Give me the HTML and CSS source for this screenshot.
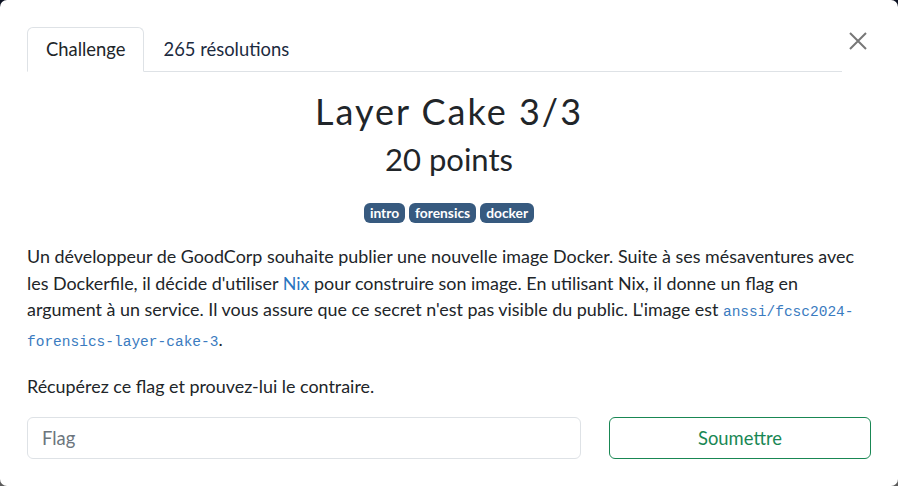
FILE: index.html
```html
<!DOCTYPE html>
<html lang="fr">
<head>
<meta charset="utf-8">
<title>Layer Cake 3/3</title>
<link rel="stylesheet" href="styles.css">
</head>
<body>
<div class="modal">
  <div class="header">
    <ul class="tabs">
      <li class="tab active">Challenge</li>
      <li class="tab">265 résolutions</li>
    </ul>
    <button class="close" aria-label="Fermer">
      <svg width="20" height="20" viewBox="0 0 20 20"><path d="M2 2 L18 18 M18 2 L2 18" stroke="#777" stroke-width="2" fill="none"/></svg>
    </button>
  </div>
  <h1 class="title">Layer Cake 3/3</h1>
  <h2 class="points">20 points</h2>
  <div class="badges">
    <span class="badge">intro</span>
    <span class="badge">forensics</span>
    <span class="badge">docker</span>
  </div>
  <p class="desc">Un développeur de GoodCorp souhaite publier une nouvelle image Docker. Suite à ses mésaventures avec les Dockerfile, il décide d'utiliser <a href="#">Nix</a> pour construire son image. En utilisant Nix, il donne un flag en argument à un service. Il vous assure que ce secret n'est pas visible du public. L'image est <code>anssi/fcsc2024-forensics-layer-cake-3</code>.</p>
  <p class="desc">Récupérez ce flag et prouvez-lui le contraire.</p>
  <form class="submit-row">
    <input class="flag" type="text" placeholder="Flag">
    <button class="submit" type="button">Soumettre</button>
  </form>
</div>
</body>
</html>
```
FILE: styles.css
```css
html, body {
  margin: 0;
  height: 100%;
}
body {
  background: linear-gradient(#0c1222, #5c5c5c);
  font-family: Lato, "Noto Sans", sans-serif;
  color: #212529;
  font-size: 18.4px;
}
.modal {
  box-sizing: border-box;
  height: 486px;
  background: #fff;
  border-radius: 7px;
  padding: 27px 27px 0 27px;
}
.header {
  display: flex;
  align-items: flex-start;
}
.tabs {
  flex: 1;
  display: flex;
  list-style: none;
  margin: 0;
  padding: 0;
  border-bottom: 1px solid #dee2e6;
}
.tab {
  padding: 8px 18px;
  line-height: 27px;
  font-size: 18.4px;
  border: 1px solid transparent;
  border-top-left-radius: 6px;
  border-top-right-radius: 6px;
  margin-bottom: -1px;
  color: #1c2b3f;
}
.tab.active {
  border-color: #dee2e6 #dee2e6 #fff;
  color: #212529;
}
.close {
  background: none;
  border: 0;
  padding: 0;
  margin: 4px 3px 0 6px;
  width: 20px;
  height: 20px;
  display: flex;
}
.title {
  margin: 18px 0 0;
  text-align: center;
  font-weight: 400;
  font-size: 36px;
  letter-spacing: 2px;
  line-height: 43px;
}
.points {
  margin: 8px 0 0;
  text-align: center;
  font-weight: 400;
  font-size: 31px;
  line-height: 37px;
}
.badges {
  display: flex;
  justify-content: center;
  gap: 4px;
  margin-top: 25px;
}
.badge {
  background: #375a7f;
  color: #fff;
  font-weight: 700;
  font-size: 13.8px;
  line-height: 20px;
  padding: 0 6px;
  border-radius: 6px;
}
.desc {
  margin: 20px 0 0;
  line-height: 26.5px;
  font-size: 17.9px;
}
.desc + .desc {
  margin-top: 18px;
}
.desc a {
  color: #2a76bf;
  text-decoration: none;
}
code {
  font-family: "Liberation Mono", "DejaVu Sans Mono", monospace;
  font-size: 14.5px;
  color: #3a7bc0;
}
.submit-row {
  display: flex;
  gap: 28px;
  margin-top: 17px;
}
.flag {
  flex: 0 0 554px;
  box-sizing: border-box;
  height: 42px;
  border: 1px solid #dee2e6;
  border-radius: 6px;
  padding: 0 14px;
  font-family: inherit;
  font-size: 18.4px;
  color: #212529;
}
.flag::placeholder {
  color: #6c757d;
}
.submit {
  flex: 1;
  height: 42px;
  box-sizing: border-box;
  background: #fff;
  border: 1px solid #198754;
  border-radius: 6px;
  color: #198754;
  font-family: inherit;
  font-size: 18.4px;
}
```
